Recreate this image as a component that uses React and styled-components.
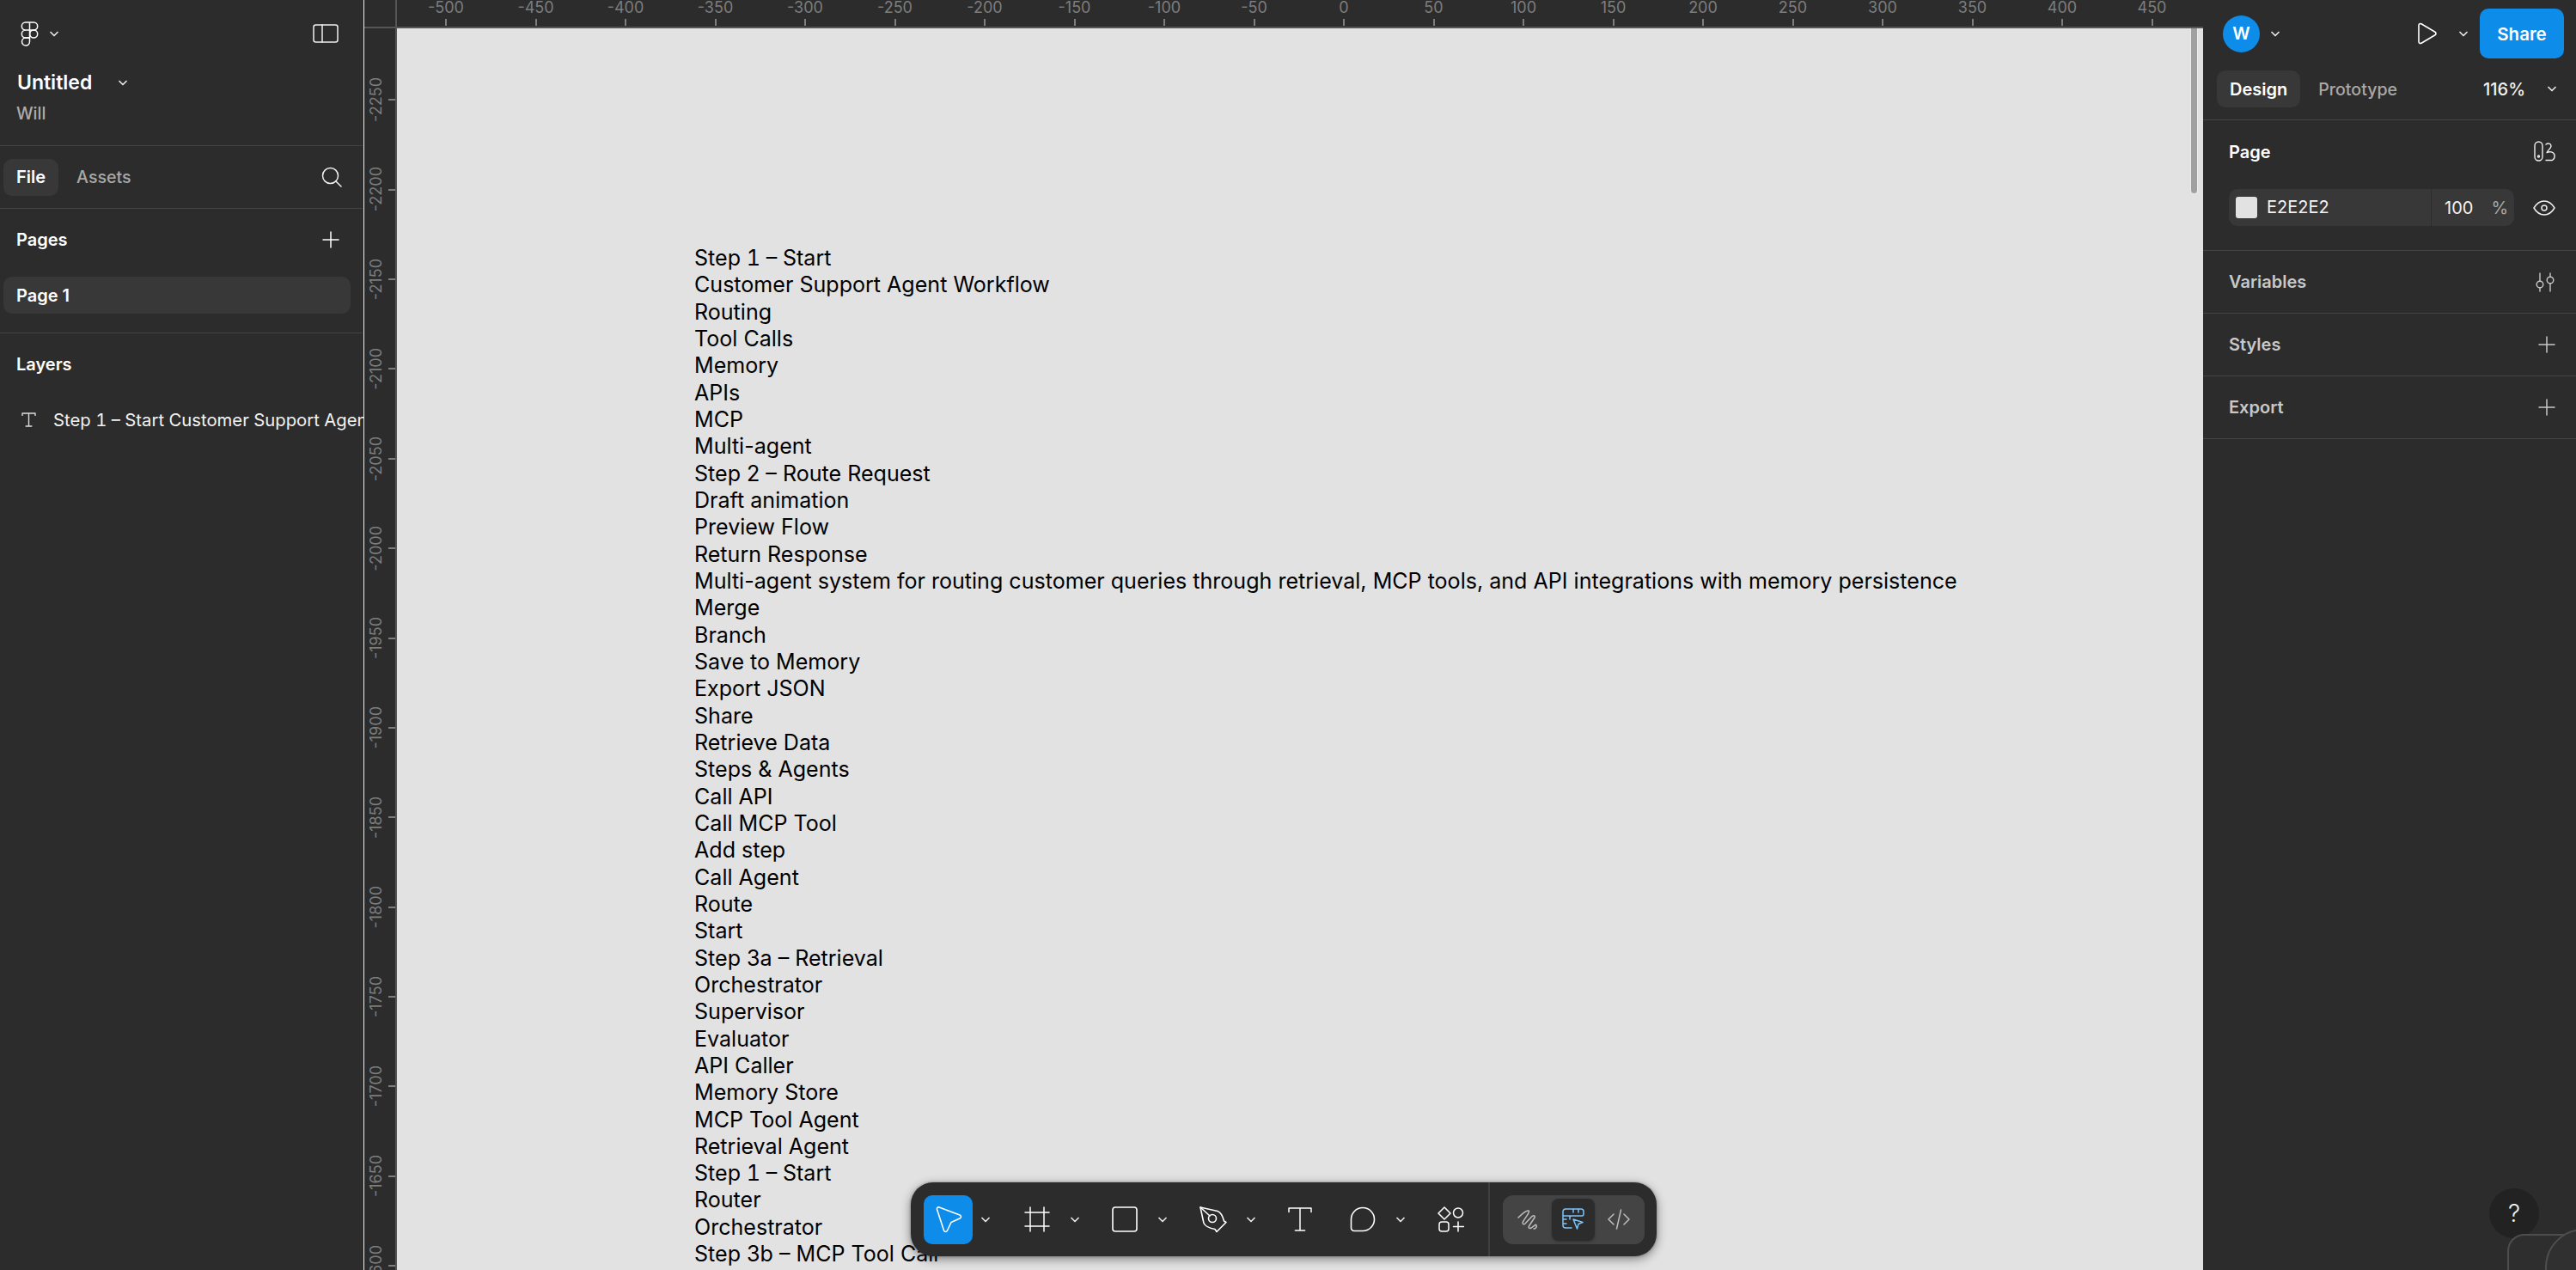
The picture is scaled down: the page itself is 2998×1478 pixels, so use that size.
import React from 'react';
import styled, { createGlobalStyle } from 'styled-components';

const Global = createGlobalStyle`
  html, body { margin: 0; padding: 0; background: #2c2c2c; }
  body { font-family: Inter, "Noto Sans", sans-serif; -webkit-font-smoothing: antialiased; }
  * { box-sizing: border-box; }
`;

const Shell = styled.div`
  width: 2998px; height: 1478px; display: flex; overflow: hidden; background: #2c2c2c; color: #fff; position: relative;
`;

/* ---------- left ---------- */
const LeftPanel = styled.aside`
  width: 424px; flex: none; border-right: 1px solid #f0f0f0; padding-right: 1px; display: flex; flex-direction: column; overflow: hidden;
`;
const Section = styled.section`
  height: ${p => p.$h}px; flex: none; border-bottom: ${p => p.$plain ? 'none' : '1px solid #444'}; display: flex; flex-direction: column;
`;
const LogoRow = styled.div`
  height: 78px; padding: 0 28px 0 24px; display: flex; align-items: center; justify-content: space-between;
`;
const Inline = styled.div`
  display: flex; align-items: center; gap: ${p => p.$gap ?? 0}px; margin-left: ${p => p.$ml ?? 0}px;
`;
const FileName = styled.div`
  padding-left: 20px; display: flex; align-items: center; gap: 31px; height: 36px; font-size: 23px; font-weight: 600; letter-spacing: 0;
`;
const Owner = styled.div`
  padding-left: 19px; margin-top: 1px; height: 34px; line-height: 34px; font-size: 19.5px; font-weight: 500; color: #ababab;
`;
const TabRow = styled.div`
  height: 72px; padding: 0 24px 0 4px; display: flex; align-items: center; gap: 6px;
`;
const Tab = styled.div`
  height: 43px; padding: 0 15px; border-radius: 10px; display: flex; align-items: center; font-size: ${p => p.$active ? 20 : 19.6}px; font-weight: ${p => p.$active ? 600 : 500};
  background: ${p => p.$active ? '#383838' : 'transparent'}; color: ${p => p.$active ? '#fff' : '#a8a8a8'};
`;
const Grow = styled.div`flex: 1;`;
const SectionHead = styled.div`
  height: ${p => p.$h ?? 72}px; padding: 0 27px 0 19px; display: flex; align-items: center; justify-content: space-between; font-size: 20px; font-weight: 600;
`;
const PageRow = styled.div`
  margin: 7px 14px 0 4px; height: 43px; border-radius: 10px; background: #383838; padding-left: 15px; display: flex; align-items: center; font-size: 20px; font-weight: 600;
`;
const LayerRow = styled.div`
  height: 44px; margin-top: 6px; padding-left: 25px; display: flex; align-items: center; gap: 20px; font-size: 20.3px; font-weight: 400; color: #f2f2f2; white-space: nowrap; font-feature-settings: "tnum";
  svg { flex: none; }
`;

/* ---------- centre ---------- */
const Centre = styled.main`
  flex: 1; min-width: 0; display: flex; flex-direction: column;
`;
const HRuler = styled.div`
  height: 33px; flex: none; display: flex; border-bottom: 2px solid #555; overflow: hidden;
`;
const Corner = styled.div`
  width: 38px; flex: none; border-right: 2px solid #555; margin-right: 4.75px;
`;
const HMark = styled.div`
  width: 104.5px; flex: none; display: flex; flex-direction: column; align-items: center; justify-content: space-between; color: #7d7d7d; font-size: 18px; line-height: 18px;
`;
const HTick = styled.i`
  width: 2px; height: 8px; background: #7d7d7d; display: block; margin-bottom: 1px;
`;
const Body = styled.div`
  flex: 1; min-height: 0; display: flex;
`;
const VRuler = styled.div`
  width: 38px; flex: none; border-right: 2px solid #555; padding-top: 31px; overflow: hidden;
`;
const VMark = styled.div`
  height: 104.4px; display: flex; align-items: center; justify-content: space-between; padding-left: 5px; color: #7d7d7d; font-size: 18px; line-height: 18px;
`;
const VLabel = styled.span`
  writing-mode: vertical-rl; transform: rotate(180deg); white-space: nowrap;
`;
const VTick = styled.i`
  width: 8px; height: 2px; background: #7d7d7d; display: block;
`;
const Canvas = styled.div`
  flex: 1; min-width: 0; background: #e2e2e2; position: relative; overflow: hidden; padding: 252px 0 0 346px;
`;
const CanvasLine = styled.div`
  font-size: 25.07px; line-height: 31.33px; color: #000; font-weight: 400; white-space: nowrap;
  font-feature-settings: ${p => p.$tabular ? '"tnum"' : 'normal'};
`;
const ScrollThumb = styled.div`
  position: absolute; top: -4px; right: 7px; width: 7px; height: 196px; border-radius: 4px; background: #a0a0a0; box-shadow: 0 0 0 1px #ececec;
`;

/* ---------- right ---------- */
const RightPanel = styled.aside`
  width: 434px; flex: none; display: flex; flex-direction: column;
`;
const TopBar = styled.div`
  height: 78px; display: flex; align-items: center; padding: 0 14px 0 23px; justify-content: space-between;
`;
const Avatar = styled.div`
  width: 43px; height: 43px; border-radius: 50%; background: #0d8ce9; display: flex; align-items: center; justify-content: center; font-size: 20px; font-weight: 600; color: #fff;
`;
const Share = styled.button`
  width: 98px; height: 58px; border: 0; border-radius: 10px; background: #0d8ce9; color: #fff; font: 600 20.5px Inter, sans-serif; padding: 0; margin-left: 14px;
`;
const DesignRow = styled.div`
  height: 62px; padding: 0 23px 10px 16px; display: flex; align-items: center; border-bottom: 1px solid #444; gap: 6px;
`;
const ZoomValue = styled.div`
  font-size: 20px; font-weight: 500; color: #f2f2f2; margin-right: 20px;
`;
const PropTitle = styled.div`
  height: ${p => p.$h ?? 73}px; flex: none; padding: 0 24px 0 30px; display: flex; align-items: center; justify-content: space-between; font-size: 20px; font-weight: 600;
  color: ${p => p.$dim ? '#c8c8c8' : '#fff'};
  border-bottom: ${p => p.$line ? '1px solid #444' : 'none'};
`;
const FillRow = styled.div`
  padding: 7px 24px 0 30px; display: flex; align-items: center; justify-content: space-between;
`;
const FillInput = styled.div`
  width: 332px; height: 43px; border-radius: 10px; background: #383838; display: flex; align-items: center; font-size: 20px; color: #f2f2f2;
`;
const Swatch = styled.div`
  width: 25px; height: 25px; margin-left: 8px; border-radius: 3px; background: #e2e2e2; flex: none;
`;
const HexText = styled.div`
  margin-left: 11px; width: 191px; flex: none; line-height: 43px; height: 43px;
`;
const OpacityCell = styled.div`
  flex: 1; height: 43px; border-left: 1px solid #2c2c2c; display: flex; align-items: center; padding-left: 15px;
`;
const Percent = styled.span`
  color: #a8a8a8; margin-left: 21px;
`;
const HelpButton = styled.div`
  position: absolute; left: 2897px; top: 1383px; width: 58px; height: 58px; border-radius: 50%; background: #222; display: flex; align-items: center; justify-content: center; font-size: 28px; font-weight: 300; color: #f2f2f2; z-index: 3;
`;
const CornerCard = styled.div`
  position: absolute; left: 2918px; top: 1436px; width: 120px; height: 80px; border: 2px solid #4d4d4d; border-radius: 20px; background: #2e2e2e; z-index: 4;
`;
const CornerDisc = styled.div`
  position: absolute; left: 2962px; top: 1430px; width: 90px; height: 90px; border: 2px solid #4d4d4d; border-radius: 50%; background: #303030; z-index: 5;
`;

/* ---------- toolbar ---------- */
const Toolbar = styled.div`
  position: absolute; left: 1060px; top: 1376px; width: 868px; height: 86px; border-radius: 26px; background: #2c2c2c; box-shadow: 0 3px 12px rgba(0,0,0,.45), 0 0 3px rgba(0,0,0,.3);
  display: flex; align-items: center; padding-left: 15px; z-index: 2;
`;
const ToolBtn = styled.div`
  width: ${p => p.$w}px; margin-left: ${p => p.$ml ?? 0}px; height: 57px; flex: none; border-radius: 10px; display: flex; align-items: center; justify-content: center;
  background: ${p => p.$active ? '#0d8ce9' : 'transparent'};
`;
const ToolDivider = styled.div`
  width: 2px; height: 86px; background: #3f3f3f; flex: none; margin: 0 15px 0 13.5px;
`;
const ModeGroup = styled.div`
  width: 165px; height: 57px; border-radius: 12px; background: #444; display: flex; align-items: center; padding: 0 2px 0 1px; flex: none;
`;
const ModeBtn = styled.div`
  flex: ${p => p.$active ? '0 0 50px' : 1}; height: 49px; border-radius: 8px; display: flex; align-items: center; justify-content: center;
  background: ${p => p.$active ? '#2c2c2c' : 'transparent'};
  box-shadow: ${p => p.$active ? '0 1px 3px rgba(0,0,0,.3)' : 'none'};
`;

const Svg = styled.svg`
  display: block; flex: none; fill: none; stroke: ${p => p.$c ?? '#fff'}; stroke-width: ${p => p.$sw ?? 1.6}px; stroke-linecap: round; stroke-linejoin: round;
`;
const I = ({ w, h = w, c, sw, children }) => <Svg width={w} height={h} viewBox={`0 0 ${w} ${h}`} $c={c} $sw={sw}>{children}</Svg>;
const Chevron = ({ c = '#e6e6e6' }) => <I w={10} h={7} c={c} sw={1.7}><path d="M1 1.5l4 4 4-4" /></I>;
const Plus = ({ c, s = 20 }) => <I w={s} c={c} sw={1.5}><path d={`M${s/2} 1v${s-2}M1 ${s/2}h${s-2}`} /></I>;

const FigmaIcon = () => <I w={21} h={29} sw={1.5}>
  <path d="M10.5 1H5.8a4.5 4.5 0 0 0 0 9h4.7zM10.5 1h4.7a4.5 4.5 0 0 1 0 9h-4.7zM10.5 10H5.8a4.5 4.5 0 0 0 0 9h4.7z" />
  <circle cx="15.2" cy="14.5" r="4.5" />
  <path d="M5.8 19h4.7v4.5a4.5 4.5 0 1 1-4.7-4.500z" />
</I>;
const TextIcon = ({ s = 17, c = '#ddd', sw = 1.4 }) => <I w={s} c={c} sw={sw}><path d={`M1 ${s*0.2}V1h${s-2}v${s*0.2-1}M${s/2} 1v${s-2}M${s*0.3} ${s-1}h${s*0.4}`} /></I>;

const lines = ['Step 1 – Start','Customer Support Agent Workflow','Routing','Tool Calls','Memory','APIs','MCP','Multi-agent','Step 2 – Route Request','Draft animation','Preview Flow','Return Response','Multi-agent system for routing customer queries through retrieval, MCP tools, and API integrations with memory persistence','Merge','Branch','Save to Memory','Export JSON','Share','Retrieve Data','Steps & Agents','Call API','Call MCP Tool','Add step','Call Agent','Route','Start','Step 3a – Retrieval','Orchestrator','Supervisor','Evaluator','API Caller','Memory Store','MCP Tool Agent','Retrieval Agent','Step 1 – Start','Router','Orchestrator','Step 3b – MCP Tool Call'];
const hMarks = Array.from({ length: 20 }, (_, i) => -500 + i * 50);
const vMarks = Array.from({ length: 14 }, (_, i) => -2250 + i * 50);

export default function App() {
  return (
    <Shell>
      <Global />
      <LeftPanel>
        <Section $h={170}>
          <LogoRow>
            <Inline $gap={13}><FigmaIcon /><Chevron /></Inline>
            <I w={30} h={22} sw={1.5} c="#f0f0f0"><rect x="1" y="1" width="28" height="20" rx="2.5" /><path d="M11 1v20" /></I>
          </LogoRow>
          <FileName>Untitled<Chevron /></FileName>
          <Owner>Will</Owner>
        </Section>
        <Section $h={73}>
          <TabRow>
            <Tab $active>File</Tab><Tab>Assets</Tab><Grow />
            <I w={24} sw={1.5} c="#f0f0f0"><circle cx="10.5" cy="10.5" r="9" /><path d="M17 17l6 6" /></I>
          </TabRow>
        </Section>
        <Section $h={145}>
          <SectionHead>Pages<Plus /></SectionHead>
          <PageRow>Page 1</PageRow>
        </Section>
        <Section $plain $h={200}>
          <SectionHead>Layers</SectionHead>
          <LayerRow><TextIcon />Step 1 – Start Customer Support Agent Workflow Routing</LayerRow>
        </Section>
      </LeftPanel>

      <Centre>
        <HRuler>
          <Corner />
          {hMarks.map(m => <HMark key={m}><span>{m}</span><HTick /></HMark>)}
        </HRuler>
        <Body>
          <VRuler>
            {vMarks.map(m => <VMark key={m}><VLabel>{m}</VLabel><VTick /></VMark>)}
          </VRuler>
          <Canvas>
            {lines.map((l, i) => <CanvasLine key={i} $tabular={l === 'Step 1 – Start'}>{l}</CanvasLine>)}
            <ScrollThumb />
          </Canvas>
        </Body>
      </Centre>

      <RightPanel>
        <TopBar>
          <Inline $gap={13}><Avatar>W</Avatar><Chevron /></Inline>
          <Inline>
            <I w={24} h={26} sw={1.6}><path d="M2 3.500C2 1.800 3.600 1 5 1.800l16 9.400c1.300.8 1.300 2.800 0 3.600L5 24.200c-1.400.8-3 0-3-1.700z" /></I>
            <Inline $ml={25}><Chevron /></Inline>
            <Share>Share</Share>
          </Inline>
        </TopBar>
        <DesignRow>
          <Tab $active>Design</Tab><Tab>Prototype</Tab><Grow />
          <ZoomValue>116%</ZoomValue><Chevron />
        </DesignRow>
        <PropTitle>Page
          <I w={25} sw={1.4} c="#eee"><rect x="1" y="1" width="9" height="22" rx="4.500" /><circle cx="5.500" cy="18" r="1" /><path d="M14 4c2.500-2 6-1 6 2 0 2.500-3.500 4.500-5 7.500 3-1.500 8-1 9 3 .5 2.500-1 5-2.500 6H14" /></I>
        </PropTitle>
        <FillRow>
          <FillInput>
            <Swatch /><HexText>E2E2E2</HexText>
            <OpacityCell>100<Percent>%</Percent></OpacityCell>
          </FillInput>
          <I w={26} h={18} sw={1.5} c="#eee"><path d="M1 9c3-5 7-8 12-8s9 3 12 8c-3 5-7 8-12 8S4 14 1 9z" /><circle cx="13" cy="9" r="3" /></I>
        </FillRow>
        <PropTitle $h={29} $line />
        <PropTitle $dim $line>Variables
          <I w={24} h={23} sw={1.4} c="#c8c8c8"><path d="M6 1v9M6 18v4M18 1v4M18 13v9" /><circle cx="6" cy="14" r="3.800" /><circle cx="18" cy="9" r="3.800" /></I>
        </PropTitle>
        <PropTitle $dim $line>Styles<Plus c="#c8c8c8" /></PropTitle>
        <PropTitle $dim $line>Export<Plus c="#c8c8c8" /></PropTitle>
      </RightPanel>

      <Toolbar>
        <ToolBtn $w={57} $active>
          <I w={32} sw={1.6}><path d="M2.500 4.500C2 2.500 3.500 1.500 5 2l24 9c2 1 2 3 0 4l-10 4.500L14.500 29c-1 2-3 2-4 0z" /></I>
        </ToolBtn>
        <ToolBtn $w={30}><Chevron /></ToolBtn>
        <ToolBtn $w={60} $ml={14.5}>
          <I w={30} sw={1.5}><path d="M7 1v28M23 1v28M1 7h28M1 23h28" /></I>
        </ToolBtn>
        <ToolBtn $w={28}><Chevron /></ToolBtn>
        <ToolBtn $w={60} $ml={14}>
          <I w={30} sw={1.6}><rect x="1" y="1" width="28" height="28" rx="3" /></I>
        </ToolBtn>
        <ToolBtn $w={28}><Chevron /></ToolBtn>
        <ToolBtn $w={60} $ml={15}>
          <I w={34} sw={1.6}><path d="M2 3l20 4.500c4 1.500 6 5.500 7.500 11.500l2.500 1.500-11 11-2-3c-6-1-11-3-13-7z" /><path d="M2 3l11 10" /><circle cx="16" cy="16" r="4.500" /></I>
        </ToolBtn>
        <ToolBtn $w={28}><Chevron /></ToolBtn>
        <ToolBtn $w={60} $ml={13.5}><TextIcon s={28} c="#fff" sw={1.5} /></ToolBtn>
        <ToolBtn $w={60} $ml={12.5}>
          <I w={30} sw={1.6}><path d="M15 1.500a13.500 13.500 0 0 1 0 27H5A3.500 3.500 0 0 1 1.500 25V15A13.500 13.500 0 0 1 15 1.500z" /></I>
        </ToolBtn>
        <ToolBtn $w={28}><Chevron /></ToolBtn>
        <ToolBtn $w={60} $ml={14.5}>
          <I w={31} sw={1.5}><path d="M8 1l7 7-7 7-7-7z" /><circle cx="24" cy="7.500" r="5.500" /><rect x="2" y="18" width="11" height="11" rx="3" /><path d="M24 18v11M18.500 23.500h12" /></I>
        </ToolBtn>
        <ToolDivider />
        <ModeGroup>
          <ModeBtn>
            <I w={24} c="#bdbdbd" sw={1.5}><path d="M1 10C5 6 10 1 13 2c2 1-3 7-6 12-2 3 0 5 2 3l8-8.500c2-1.500 4-.5 3 1.500l-6 9c-2 3 0 4 2 3 3-2 6-5 6-3 1 2-1 4-3 4" /></I>
          </ModeBtn>
          <ModeBtn $active>
            <I w={26} c="#7cc4f8" sw={1.5}><path d="M11 23H4a3 3 0 0 1-3-3V4a3 3 0 0 1 3-3h18a3 3 0 0 1 3 3v3a2 2 0 0 1-2 2H11a2 2 0 0 0-2 2v2M1 9h8M13 1v4M19 1v4M1 13h4M1 18h4" /><path d="M13 13l11 3.500-5 2-1.500 5.500z" /></I>
          </ModeBtn>
          <ModeBtn>
            <I w={26} c="#bdbdbd" sw={1.5}><path d="M7 7l-6 6 6 6M19 7l6 6-6 6M15.500 2l-5 22" /></I>
          </ModeBtn>
        </ModeGroup>
      </Toolbar>

      <HelpButton>?</HelpButton>
      <CornerCard />
      <CornerDisc />
    </Shell>
  );
}
